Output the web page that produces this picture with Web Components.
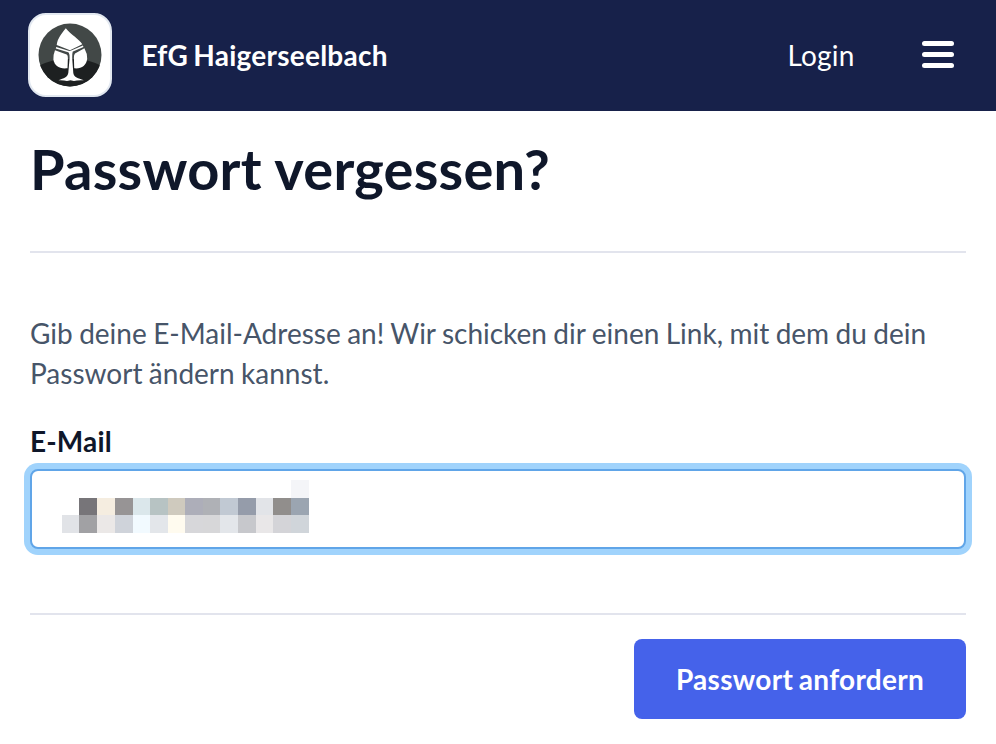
<!DOCTYPE html>
<html lang="de">
<head>
<meta charset="utf-8">
<title>Passwort vergessen?</title>
<style>
html, body { margin: 0; background: #fff; }
body { font-family: Lato, "Liberation Sans", sans-serif; font-size: 28px; line-height: 40px; color: #475569; }
</style>
</head>
<body>
<reset-page></reset-page>
<script>
const define = (name, html, init) => customElements.define(name, class extends HTMLElement {
  constructor() {
    super();
    this.attachShadow({ mode: 'open' }).innerHTML = html;
    if (init) init(this.shadowRoot);
  }
});

define('church-logo', `
<style>
:host { display: block; box-sizing: border-box; width: 84px; height: 84px; border-radius: 18px; background: #fff; border: 2px solid #e2e8f0; overflow: hidden; }
svg { display: block; width: 80px; height: 80px; }
</style>
<svg viewBox="10 10 80 80" aria-hidden="true">
  <defs><clipPath id="disc"><circle cx="50" cy="50" r="31.5"/></clipPath></defs>
  <g clip-path="url(#disc)">
    <rect x="18" y="18" width="64" height="64" fill="#424847"/>
    <path d="M18 61Q34 53 50 54Q67 53 82 61V82H18Z" fill="#1d2021"/>
  </g>
  <path d="M45.800 23.200C42 28 37.300 33.500 36.700 40L50 45.200L62.300 39.300C59 33.500 51.500 30.500 45.800 23.200Z" fill="#fff"/>
  <path d="M35 45.300L46.700 49.400Q48 50.200 47.900 53L47.500 63.300C39 64.300 34.500 60.500 33.400 54.500Q33.200 49.500 35 45.300Z" fill="#fff"/>
  <path d="M64.400 43.300L55 48.500Q53.800 49.600 53.900 53L54.200 63.300C61.500 64 66.300 60.500 67.200 54Q67.400 48.500 64.400 43.300Z" fill="#fff"/>
  <path d="M36 42.700L48.300 46.500Q50 47 51.500 46.200L63.200 41.200" fill="none" stroke="#fff" stroke-width="1.500"/>
  <path d="M48.400 46.500L52.800 46.200Q52 49 52.200 53L53.300 68C54 72.500 58 73 63.800 75.300Q57 75 54 76L50.500 75.300L47 76Q43.500 75 38.500 75.300C44 73 47.300 72.500 48.300 68L49.600 53Q49.800 49.500 48.400 46.500Z" fill="#fff"/>
</svg>`);

define('menu-icon', `
<style>
:host { display: flex; flex-direction: column; gap: 6px; width: 32px; padding-bottom: 2px; }
i { height: 5px; border-radius: 2.5px; background: #fff; }
</style><i></i><i></i><i></i>`);

define('site-header', `
<style>
:host { display: flex; align-items: center; box-sizing: border-box; height: 111px; padding: 0 42px 1px 28px; background: #17214a; color: #fff; }
.brand { margin-left: 29.5px; font-weight: 700; letter-spacing: .25px; word-spacing: -2px; }
.login { margin-left: auto; margin-right: 67.5px; letter-spacing: .2px; }
</style>
<church-logo></church-logo>
<span class="brand"><slot name="brand"></slot></span>
<span class="login"><slot></slot></span>
<menu-icon></menu-icon>`);

define('pixel-mask', `
<style>
:host { display: grid; width: 247px; height: 53px; grid-template-rows: 18px 17px 18px; grid-template-columns: 17px 18px 18px 18px 17px 18px 17px 18px 17px 18px 18px 17px 18px 18px; }
</style>`, root => {
  const rows = [
    ['', '', '', '', '', '', '', '', '', '', '', '', '', '#f4f5f8'],
    ['', '#777579', '#f5ede0', '#979495', '#dbe7eb', '#b7c3c3', '#cfcabe', '#adaeb9', '#afb1b6', '#c1c9d3', '#959caa', '#e2e4e8', '#918e8c', '#9ba5b1'],
    ['#e1e3e7', '#a1a1a4', '#ebe8e7', '#cfd3da', '#f2faff', '#e3e6ea', '#fffbef', '#d7d7da', '#d7d7d9', '#e3e6ea', '#c7c8cc', '#e9e7e8', '#d4d4d8', '#d0d5da']
  ];
  for (const c of rows.flat()) {
    const cell = document.createElement('b');
    cell.style.background = c || 'transparent';
    root.append(cell);
  }
});

define('email-field', `
<style>
:host { display: block; }
.label { display: block; font-weight: 700; color: #0f172a; line-height: 40px; letter-spacing: .15px; }
.box { box-sizing: border-box; height: 80px; margin-top: 8px; padding: 9px 30px; border: 2px solid #60a5e8; border-radius: 8px; background: #fff; box-shadow: 0 0 0 6px #a0d3fc; }
</style>
<span class="label"><slot></slot></span>
<div class="box"><pixel-mask></pixel-mask></div>`);

define('submit-button', `
<style>
:host { display: flex; align-items: center; justify-content: center; box-sizing: border-box; width: 332px; height: 80px; border-radius: 8px; background: #4562ea; color: #fff; font-weight: 700; white-space: nowrap; letter-spacing: .3px; word-spacing: -1.5px; }
</style><slot></slot>`);

define('reset-page', `
<style>
:host { display: block; height: 744px; overflow: hidden; }
main { padding: 0 30px; }
h1 { margin: 0; padding-top: 22px; height: 118px; font-size: 56px; line-height: 72px; font-weight: 700; letter-spacing: .25px; color: #0f172a; }
hr { margin: 0; border: 0; height: 2px; background: #e2e4ed; }
p { margin: 60px 0 28px; word-spacing: -.75px; }
footer { display: flex; justify-content: flex-end; padding-top: 24px; }
email-field { margin-bottom: 64px; }
</style>
<site-header><span slot="brand">EfG Haigerseelbach</span>Login</site-header>
<main>
  <h1>Passwort vergessen?</h1>
  <hr>
  <p>Gib deine E-Mail-Adresse an! Wir schicken dir einen Link, mit dem du dein Passwort ändern kannst.</p>
  <email-field>E-Mail</email-field>
  <hr>
  <footer><submit-button>Passwort anfordern</submit-button></footer>
</main>`);
</script>
</body>
</html>
